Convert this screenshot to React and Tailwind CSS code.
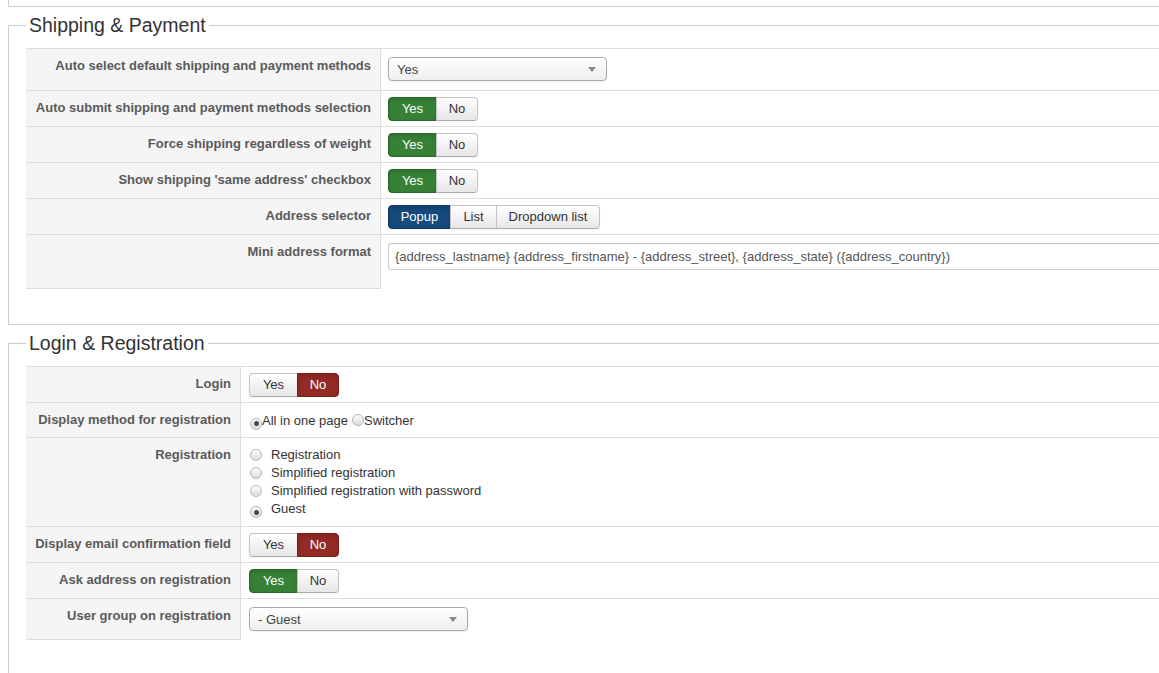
import React from "react";

const font = { fontFamily: '"Liberation Sans", Arial, sans-serif' };

const activeTone = {
  green: "bg-[#378137] border-[#2b682b] text-white shadow-[inset_0_2px_4px_rgba(0,0,0,0.15)]",
  red: "bg-[#942a25] border-[#7a211d] text-white shadow-[inset_0_2px_4px_rgba(0,0,0,0.15)]",
  blue: "bg-[#154a7c] border-[#0f3a63] text-white shadow-[inset_0_2px_4px_rgba(0,0,0,0.15)]",
};

function Toggle({ options, active, tone }) {
  return (
    <div className="inline-flex h-[24px]">
      {options.map(([label, width], index) => {
        const isActive = index === active;
        const first = index === 0;
        const last = index === options.length - 1;
        return (
          <span
            key={label}
            style={{ width }}
            className={[
              "flex items-center justify-center border text-[13px] leading-[22px]",
              first ? "rounded-l-[4px]" : "-ml-px",
              last ? "rounded-r-[4px]" : "",
              isActive
                ? activeTone[tone]
                : "bg-linear-to-b from-white to-[#e6e6e6] border-[#c4c4c4] border-b-[#adadad] text-[#333] shadow-[0_1px_2px_rgba(0,0,0,0.05)]",
            ].join(" ")}
          >
            {label}
          </span>
        );
      })}
    </div>
  );
}

function Select({ value }) {
  return (
    <div className="relative flex h-[24px] w-[219px] items-center rounded-[4px] border border-[#aaa] bg-linear-to-b from-white to-[#eee] pt-[1px] pl-[8px] text-[13px] text-[#444] shadow-[0_1px_2px_rgba(0,0,0,0.06)]">
      {value}
      <span className="absolute right-[10px] top-[9px] h-0 w-0 border-x-[4px] border-t-[5px] border-x-transparent border-t-[#888]" />
    </div>
  );
}

function Radio({ checked }) {
  return (
    <span className="inline-flex h-[12px] w-[12px] shrink-0 items-center justify-center rounded-full border border-[#b5b5b5] bg-linear-to-b from-[#fdfdfd] to-[#dcdcdc]">
      {checked ? <span className="h-[5px] w-[5px] rounded-full bg-[#4a4a4a]" /> : null}
    </span>
  );
}

function Row({ label, labelWidth, height, last, children, valuePad = "pt-[8px]" }) {
  return (
    <div className="flex border-t border-[#ddd]" style={{ height }}>
      <div
        style={{ width: labelWidth }}
        className={`shrink-0 border-r border-[#ddd] bg-[#f5f5f5] pr-[9px] pt-[8px] text-right text-[13px] font-bold leading-[18px] text-[#5a5a5a] ${last ? "border-b" : ""}`}
      >
        {label}
      </div>
      <div className={`flex-1 pl-[7px] ${valuePad}`}>{children}</div>
    </div>
  );
}

function Fieldset({ title, children }) {
  return (
    <fieldset className="mt-[6px] ml-2 w-[1190px] border border-[#ccc] px-[17px] pb-[35px]">
      <legend className="px-[3px] text-[19.5px] leading-[24px] text-[#333]">{title}</legend>
      <div className="mt-[11px]">{children}</div>
    </fieldset>
  );
}

export default function App() {
  const yesNo = [
    ["Yes", 49],
    ["No", 42],
  ];
  return (
    <div className="h-[673px] w-[1159px] overflow-hidden bg-white" style={font}>
      <div className="ml-2 h-[7px] w-[1190px] border-b border-l border-[#ccc]" />

      <Fieldset title="Shipping & Payment">
        <Row label="Auto select default shipping and payment methods" labelWidth={355} height={42}>
          <Select value="Yes" />
        </Row>
        <Row label="Auto submit shipping and payment methods selection" labelWidth={355} height={36} valuePad="pt-[5px]">
          <Toggle options={yesNo} active={0} tone="green" />
        </Row>
        <Row label="Force shipping regardless of weight" labelWidth={355} height={36} valuePad="pt-[5px]">
          <Toggle options={yesNo} active={0} tone="green" />
        </Row>
        <Row label="Show shipping 'same address' checkbox" labelWidth={355} height={36} valuePad="pt-[5px]">
          <Toggle options={yesNo} active={0} tone="green" />
        </Row>
        <Row label="Address selector" labelWidth={355} height={36} valuePad="pt-[5px]">
          <Toggle
            options={[
              ["Popup", 63],
              ["List", 47],
              ["Dropdown list", 104],
            ]}
            active={0}
            tone="blue"
          />
        </Row>
        <Row label="Mini address format" labelWidth={355} height={55} last>
          <div className="flex h-[27px] items-center rounded-l-[3px] border border-r-0 border-[#ccc] pl-[6px] text-[13px] text-[#555] shadow-[inset_0_1px_1px_rgba(0,0,0,0.05)]">
            {"{address_lastname} {address_firstname} - {address_street}, {address_state} ({address_country})"}
          </div>
        </Row>
      </Fieldset>

      <Fieldset title="Login & Registration">
        <Row label="Login" labelWidth={215} height={36} valuePad="pt-[5px] !pl-[8px]">
          <Toggle options={yesNo} active={1} tone="red" />
        </Row>
        <Row label="Display method for registration" labelWidth={215} height={35} valuePad="pt-[7px] !pl-[9px]">
          <div className="flex items-center text-[13px] leading-[18px] text-[#333]">
            <span className="mt-[3px]">
              <Radio checked />
            </span>
            <span>All in one page</span>
            <span className="ml-[4px] mt-[3px]">
              <Radio />
            </span>
            <span>Switcher</span>
          </div>
        </Row>
        <Row label="Registration" labelWidth={215} height={89} valuePad="pt-[8px] !pl-[9px]">
          {[
            ["Registration", false],
            ["Simplified registration", false],
            ["Simplified registration with password", false],
            ["Guest", true],
          ].map(([text, checked]) => (
            <div key={text} className="flex h-[18px] items-center text-[13px] leading-[18px] text-[#333]">
              <span className="mt-[3px]">
                <Radio checked={checked} />
              </span>
              <span className="ml-[9px]">{text}</span>
            </div>
          ))}
        </Row>
        <Row label="Display email confirmation field" labelWidth={215} height={36} valuePad="pt-[5px] !pl-[8px]">
          <Toggle options={yesNo} active={1} tone="red" />
        </Row>
        <Row label="Ask address on registration" labelWidth={215} height={36} valuePad="pt-[5px] !pl-[8px]">
          <Toggle options={yesNo} active={0} tone="green" />
        </Row>
        <Row label="User group on registration" labelWidth={215} height={42} last valuePad="pt-[8px] !pl-[8px]">
          <Select value="- Guest" />
        </Row>
      </Fieldset>
    </div>
  );
}
